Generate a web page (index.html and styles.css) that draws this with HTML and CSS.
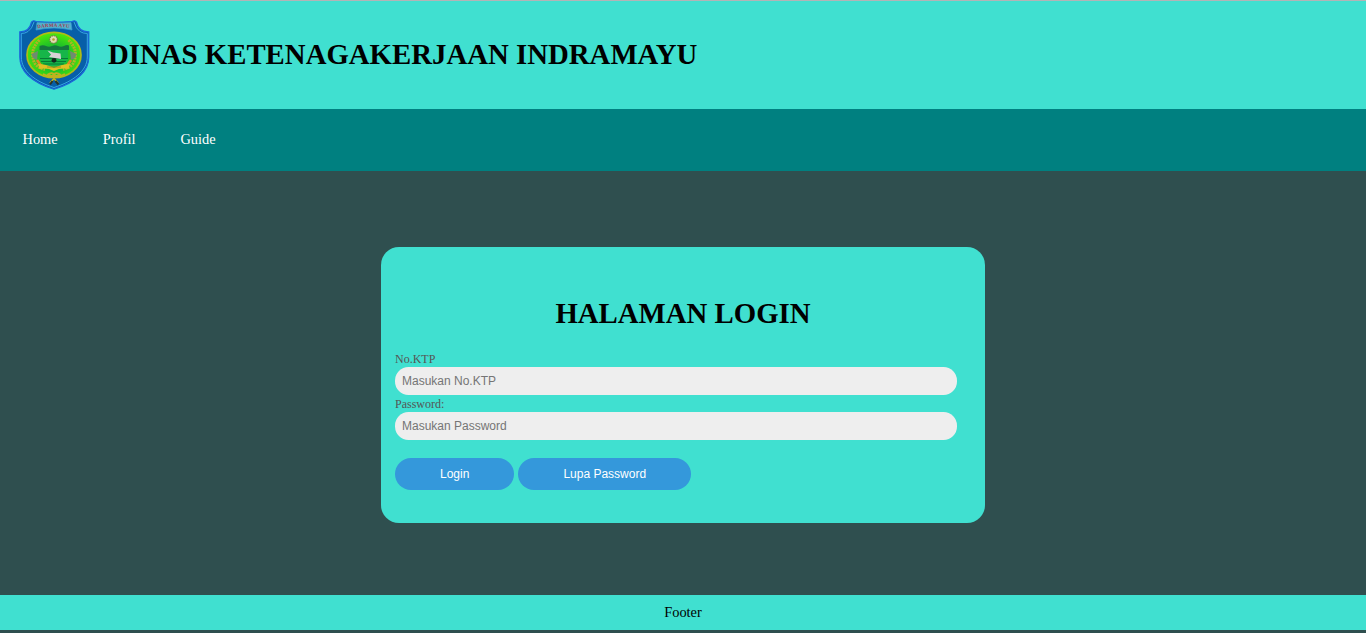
FILE: index.html
```html
<!DOCTYPE html>
<html lang="id">
<head>
<meta charset="utf-8">
<title>Dinas Ketenagakerjaan Indramayu</title>
<link rel="stylesheet" href="styles.css">
</head>
<body>
<header class="header">
  <svg class="logo" viewBox="0 0 72 72" aria-label="Logo Indramayu">
    <defs>
      <radialGradient id="field" cx="50%" cy="55%" r="60%">
        <stop offset="0" stop-color="#13a838"/>
        <stop offset=".5" stop-color="#22c426"/>
        <stop offset="1" stop-color="#5cf000"/>
      </radialGradient>
    </defs>
    <path d="M18 2.500Q15 .8 13.500 3C12 10 8 13 1.800 12.800V38C1.800 54 16 64 36 70.300C56 64 70.800 54 70.800 38V12.800C64 13 60 10 58.500 3Q57 .8 54 2.500Q36 4 18 2.500Z" fill="#075fa8" stroke="#1c66dd" stroke-width="1.200"/>
    <path d="M16 3Q14 10 10 12.500Q7 14.500 3.300 14.500V38C3.300 52 17 62.500 36 68.500C55 62.500 69.300 52 69.300 38V14.500Q65 14.500 62 12.500Q58 10 56 3" fill="none" stroke="#38a5e6" stroke-width="1"/>
    <path d="M19 3.500Q36 4.700 53 3.500L54 11Q36 7 18 11Z" fill="#50b3cc" stroke="#3b9bd4" stroke-width=".7"/>
    <path id="motto" d="M19.500 9.300Q36 6.300 53 9.300" fill="none"/>
    <text class="motto"><textPath href="#motto" textLength="32">DARMA AYU</textPath></text>
    <ellipse cx="36" cy="36" rx="27" ry="22.700" fill="url(#field)" stroke="#b3ba17" stroke-width="1.700"/>
    <path d="M21.500 27Q25 25.500 28 27T34 27T40 27T46 27T51 26.500V31H21.500Z" fill="#16773d"/>
    <path d="M22 31H50V40Q48 45 42 47H30Q24 45 22 40Z" fill="#16b549"/>
    <path d="M22 39.500H50M23 42.500H48M25 45H46" stroke="#087a35" stroke-width="1"/>
    <path d="M29.500 31.500L35 33.500L42.500 34.500L43 40L31 38L33 35.500Z" fill="#d8d3d7"/>
    <circle cx="36" cy="41.300" r="2.400" fill="#14281d"/>
    <path d="M21.500 21Q11 31 16.500 44Q20 49 27 50.500" fill="none" stroke="#b0b324" stroke-width="3" stroke-dasharray="2 .8"/>
    <path d="M50.500 21Q61 31 55.500 44Q52 49 45 50.500" fill="none" stroke="#b0b324" stroke-width="3" stroke-dasharray="2 .8"/>
    <path d="M13.500 35L20 32L19 41L15 39ZM58.500 35L52 32L53 41L57 39Z" fill="#6f8b70"/>
    <path d="M19 41L23.500 47.500M53 41L48.500 47.500" stroke="#e08a22" stroke-width="2.700"/>
    <path d="M20 45Q28 45 36 49Q44 45 52 45L50.500 50Q43 48.500 36 52Q29 48.500 21.500 50Z" fill="#dfc022"/>
    <path d="M29 48H43" stroke="#a98a25" stroke-width="1"/>
    <circle cx="35.500" cy="20.500" r="3.800" fill="#dfdfb0" stroke="#727447" stroke-width="1.100" stroke-dasharray="1.500 .7"/>
    <circle cx="35.500" cy="20.500" r="1.300" fill="#bc9b28"/>
    <path d="M25 55Q34 60 42 55.500Q38 52 34 57L40 64M47 55Q38 60 30 55.500Q34 52 38 57L32 64" fill="none" stroke="#c0b120" stroke-width="1.700"/>
    <path d="M34.500 62L32 65.500M37.500 62L40.500 65.500" stroke="#26332d" stroke-width="2"/>
  </svg>
  <h1 class="title">DINAS KETENAGAKERJAAN INDRAMAYU</h1>
</header>
<nav class="nav">
  <a class="nav-link">Home</a>
  <a class="nav-link">Profil</a>
  <a class="nav-link">Guide</a>
</nav>
<main class="main">
  <form class="card">
    <h1 class="card-title">HALAMAN LOGIN</h1>
    <label class="label" for="ktp">No.KTP</label>
    <input class="input" id="ktp" type="text" placeholder="Masukan No.KTP">
    <label class="label" for="password">Password:</label>
    <input class="input" id="password" type="password" placeholder="Masukan Password">
    <div class="actions">
      <button class="button" type="button">Login</button>
      <button class="button" type="button">Lupa Password</button>
    </div>
  </form>
</main>
<footer class="footer">Footer</footer>
</body>
</html>
```
FILE: styles.css
```css
* { box-sizing: border-box; }
body {
  margin: 0;
  height: 633px;
  display: flex;
  flex-direction: column;
  padding-bottom: 3px;
  overflow: hidden;
  background: darkslategray;
  font-family: "Liberation Serif", "Times New Roman", serif;
  font-size: 14.4px;
  color: #000;
}
.header {
  height: 109px;
  flex: none;
  display: flex;
  align-items: center;
  gap: 18px;
  padding: 0 18px;
  border-top: 1px solid #b4b4b6;
  background: turquoise;
}
.logo { width: 72px; height: 72px; }
.motto { font: bold 5px "Liberation Serif", serif; fill: #a53b53; }
.title, .card-title {
  margin: 0;
  font-size: 28.8px;
  line-height: 33px;
  font-weight: bold;
}
.title { padding-bottom: 2px; }
.nav {
  height: 62px;
  flex: none;
  display: flex;
  align-items: center;
  gap: 45px;
  padding: 0 22.5px 2px;
  background: teal;
  color: #fff;
}
.main {
  flex: 1;
  display: flex;
  justify-content: center;
  align-items: flex-start;
  padding-top: 76px;
}
.card {
  width: 604px;
  height: 276px;
  padding: 50px 14px 0;
  border-radius: 18px;
  background: turquoise;
}
.card-title { text-align: center; margin-bottom: 20px; }
.label {
  display: block;
  height: 17px;
  font-size: 12px;
  line-height: 19px;
  color: #555;
}
.input {
  display: block;
  width: 562px;
  height: 28px;
  padding: 0 7px;
  border: 0;
  border-radius: 13.5px;
  background: #eee;
  font: 12px "Liberation Sans", Arial, sans-serif;
}
.input::placeholder { color: #757575; }
.actions { display: flex; gap: 4px; margin-top: 18px; }
.button {
  height: 32px;
  padding: 0 45px;
  border: 0;
  border-radius: 18px;
  background: #3498db;
  color: #fff;
  font: 12px "Liberation Sans", Arial, sans-serif;
}
.footer {
  height: 35px;
  line-height: 35px;
  flex: none;
  text-align: center;
  background: turquoise;
}
```
